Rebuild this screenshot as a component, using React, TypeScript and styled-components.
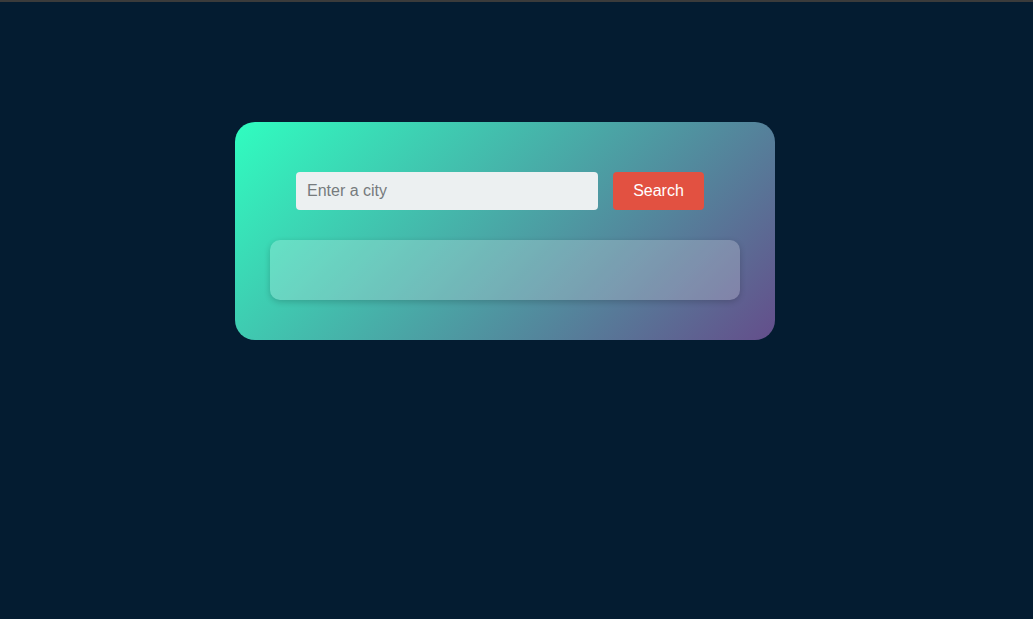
import React from "react";
import styled, { createGlobalStyle } from "styled-components";

const Global = createGlobalStyle`
  html, body { margin: 0; padding: 0; background: #041c31; }
  body { font-family: "Liberation Sans", Arial, sans-serif; }
`;

const Page = styled.div`
  min-height: 619px;
  box-sizing: border-box;
  border-top: 2px solid #3b3b3b;
  background: #041c31;
  padding: 120px 0 0 235px;
`;

const Card = styled.div`
  width: 540px;
  box-sizing: border-box;
  background: linear-gradient(135deg, #30fdc0, #644e8b);
  border-radius: 20px;
  padding: 50px 35px 40px;
`;

const SearchRow = styled.div`
  display: flex;
  gap: 15px;
  padding-left: 26px;
`;

const Input = styled.input`
  width: 302px;
  height: 38px;
  box-sizing: border-box;
  border: none;
  outline: none;
  background: #ecf0f1;
  border-radius: 4px;
  padding: 0 11px;
  font-family: "Liberation Sans", Arial, sans-serif;
  font-size: 16px;
  color: #333;
  &::placeholder { color: #767b7d; }
`;

const Button = styled.button`
  width: 91px;
  height: 38px;
  border: none;
  border-radius: 4px;
  background: #e25141;
  color: #ffffff;
  font-family: "Liberation Sans", Arial, sans-serif;
  font-size: 16px;
  cursor: pointer;
`;

const Result = styled.div`
  margin-top: 30px;
  height: 60px;
  border-radius: 10px;
  background: rgba(255, 255, 255, 0.22);
  box-shadow: 0 2px 6px rgba(0, 0, 0, 0.18);
`;

export default function App() {
  return (
    <>
      <Global />
      <Page>
        <Card>
          <SearchRow>
            <Input placeholder="Enter a city" />
            <Button>Search</Button>
          </SearchRow>
          <Result />
        </Card>
      </Page>
    </>
  );
}
